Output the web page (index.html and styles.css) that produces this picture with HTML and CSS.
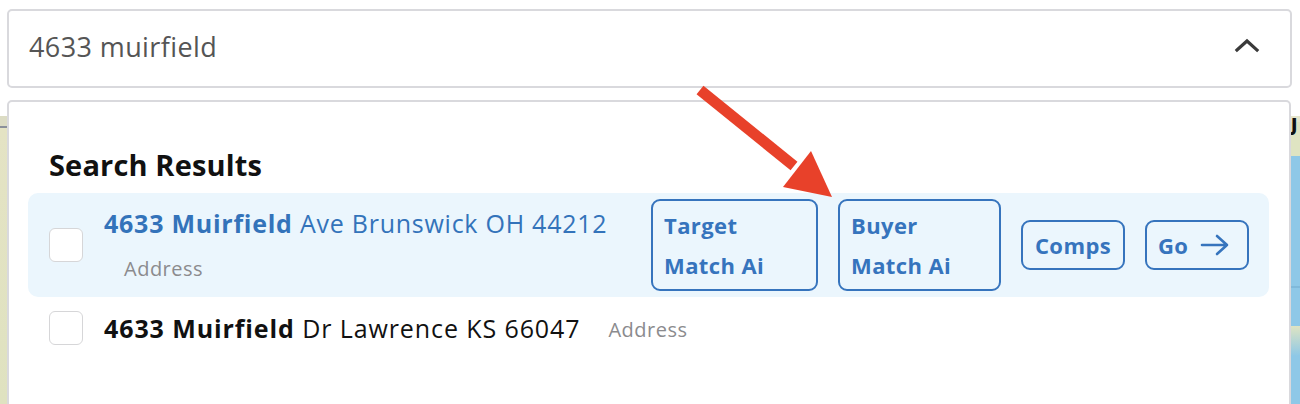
FILE: index.html
```html
<!DOCTYPE html>
<html>
<head>
<meta charset="utf-8">
<link rel="stylesheet" href="styles.css">
</head>
<body>
<div class="page">
  <div class="search">
    <span class="query">4633 muirfield</span>
    <svg class="chev" width="26" height="16" viewBox="0 0 26 16"><path d="M3 13 L13 4 L23 13" fill="none" stroke="#3a3a3a" stroke-width="3.2" stroke-linecap="square"/></svg>
  </div>
  <div class="map">
    <div class="map-left"></div>
    <div class="map-right"><span class="map-label">J</span></div>
  </div>
  <div class="dropdown">
    <h2 class="heading">Search Results</h2>
    <div class="result active">
      <span class="check"></span>
      <div class="info">
        <div class="title"><b>4633 Muirfield</b> Ave Brunswick OH 44212</div>
        <div class="type">Address</div>
      </div>
      <div class="actions">
        <button class="btn tall">Target<br>Match Ai</button>
        <button class="btn tall">Buyer<br>Match Ai</button>
        <button class="btn comps">Comps</button>
        <button class="btn go">Go <svg width="30" height="22" viewBox="0 0 30 22"><path d="M2 11 H27 M17 2 L27 11 L17 20" fill="none" stroke="#3674bd" stroke-width="2.6" stroke-linecap="round" stroke-linejoin="round"/></svg></button>
      </div>
    </div>
    <div class="result plain">
      <span class="check"></span>
      <div class="title"><b>4633 Muirfield</b> Dr Lawrence KS 66047</div>
      <div class="type inline">Address</div>
    </div>
  </div>
  <svg class="pointer" width="160" height="130" viewBox="0 0 160 130"><path d="M4 6 L98 82" stroke="#e8412a" stroke-width="11" stroke-linecap="butt"/><path d="M136 113 L87 103 L115 67 Z" fill="#e8412a"/></svg>
</div>
</body>
</html>
```
FILE: styles.css
```css
* { box-sizing: border-box; }
html, body { margin: 0; padding: 0; background: #fff; }
body { font-family: "Open Sans", "Liberation Sans", sans-serif; width: 1300px; height: 404px; overflow: hidden; }
.page { position: relative; width: 1300px; height: 404px; padding-top: 9px; overflow: hidden; }
.search {
  margin: 0 8px 0 7px;
  height: 79px;
  border: 2px solid #d9d9dd;
  border-radius: 5px;
  display: flex;
  align-items: center;
  justify-content: space-between;
  padding: 0 30px 0 20px;
}
.query { font-size: 27px; letter-spacing: 0.4px; color: #555; margin-top: -4px; }
.chev { margin-top: -8px; }
.map { margin-top: 28px; height: 288px; display: flex; justify-content: space-between; }
.map-left { width: 8px; background: linear-gradient(180deg, #dcdcc4 0, #dcdcc4 10px, #8a8f9a 10px, #8a8f9a 12px, #e4e3c4 12px, #dfe2c0 100%); }
.map-right { width: 10px; position: relative; background: linear-gradient(180deg, #e6e6cc 0, #e6e6cc 6px, #dfe4c2 6px, #dfe4c2 40px, #8ec8e7 40px, #8ec8e7 170px, #7fb9da 170px, #7fb9da 172px, #8ec8e7 172px, #8ec8e7 210px, #dfe4c2 210px, #8ec8e7 240px); }
.map-label { position: absolute; left: 1px; top: -4px; font-weight: 800; font-size: 18px; color: #111; }
.dropdown {
  position: absolute;
  left: 7px; top: 100px;
  width: 1284px; height: 320px;
  background: #fff;
  border: 2px solid #d9d9dd;
  border-radius: 5px;
  padding: 45px 20px 0 19px;
}
.heading { margin: 0 0 10px 21px; font-size: 29px; font-weight: 700; color: #111; line-height: 36px; letter-spacing: 0.15px; }
.result { display: flex; align-items: center; border-radius: 10px; }
.result.active { background: #ebf6fd; height: 104px; padding: 0 20px 0 21px; }
.check { width: 34px; height: 34px; border: 1.5px solid #d6d6d8; border-radius: 6px; background: #fff; flex: none; }
.info { margin-left: 21px; align-self: flex-start; margin-top: 14px; }
.title { font-size: 25px; color: #3373ba; line-height: 32px; letter-spacing: 0.75px; }
.title b { font-weight: 700; }
.active .type { margin: 18px 0 0 20px; font-size: 20px; line-height: 24px; letter-spacing: 0.5px; color: #8b8b8e; }
.actions { margin-left: auto; display: flex; align-items: center; gap: 20px; }
.btn {
  font-family: inherit;
  background: transparent;
  border: 2px solid #3674bd;
  border-radius: 9px;
  color: #3674bd;
  font-weight: 700;
  font-size: 22px;
  height: 50px;
  padding: 0 11px;
  display: flex; align-items: center;
  letter-spacing: 0.4px;
}
.btn.tall { height: 92px; width: 167px; text-align: left; line-height: 40px; }
.btn.tall + .btn.tall { width: 163px; }
.btn.comps { width: 104px; justify-content: center; }
.btn.go { gap: 12px; width: 104px; }
.result.plain { padding: 14px 0 0 21px; }
.plain .title { color: #111; margin-left: 21px; letter-spacing: 0.9px; }
.type.inline { margin: 3px 0 0 28px; font-size: 20px; line-height: 24px; letter-spacing: 0.5px; color: #8b8b8e; }
.pointer { position: absolute; left: 696px; top: 84px; }
```
